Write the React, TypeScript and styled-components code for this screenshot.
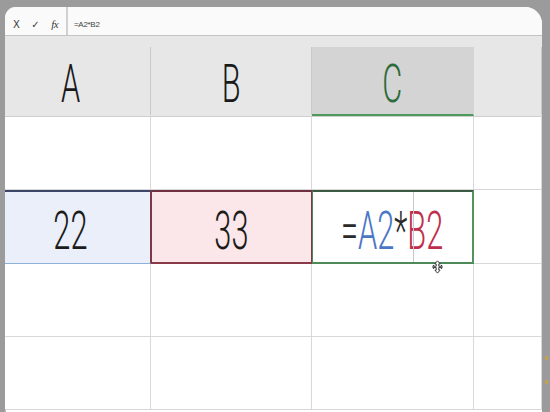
import React from "react";
import styled, { createGlobalStyle } from "styled-components";

const Global = createGlobalStyle`
  html, body { margin: 0; padding: 0; background: #9d9d9d; overflow: hidden; }
  * { box-sizing: border-box; }
`;

const Screen = styled.div`
  width: 550px;
  height: 412px;
  background: #9b9b9b;
  padding: 7px 8px 0 5px;
  display: flex;
  position: relative;
  overflow: hidden;
`;

const Window = styled.div`
  flex: 1;
  background: #ffffff;
  border-radius: 11px 17px 0 0;
  overflow: hidden;
  display: flex;
  flex-direction: column;
  box-shadow: inset 1px 0 0 #bdbdbd;
`;

const FormulaBar = styled.div`
  height: 29px;
  flex: none;
  display: flex;
  align-items: stretch;
  background: #fafafa;
  border-bottom: 1px solid #c4c4c4;
`;

const BarButtons = styled.div`
  width: 63px;
  display: flex;
  align-items: center;
  padding: 6px 0 0 8px;
  gap: 12px;
  color: #3a3a3a;
  border-right: 2px solid #d0d0d0;
`;

const BarGlyph = styled.span<{ $italic?: boolean }>`
  font-style: ${(p) => (p.$italic ? "italic" : "normal")};
  font-family: ${(p) => (p.$italic ? '"Liberation Serif", serif' : '"DejaVu Sans", sans-serif')};
  font-size: ${(p) => (p.$italic ? "11px" : "10px")};
  letter-spacing: -0.5px;
`;

const FormulaText = styled.div`
  display: flex;
  align-items: center;
  padding: 6px 0 0 6px;
  font-family: "Liberation Sans", sans-serif;
  font-size: 8px;
  color: #444;
  letter-spacing: -0.3px;
`;

const HeaderBand = styled.div`
  flex: none;
  height: 81px;
  background: #e7e7e7;
  padding-top: 11px;
  display: grid;
  grid-template-columns: 146px 161px 162px 1fr;
  border-bottom: 1px solid #cfcfcf;
`;

const HeadCell = styled.div<{ $active?: boolean; $shift?: number }>`
  display: flex;
  align-items: center;
  justify-content: center;
  padding-top: 7px;
  padding-right: ${(p) => p.$shift ?? 0}px;
  background: ${(p) => (p.$active ? "#d4d4d4" : "transparent")};
  border-right: 1px solid ${(p) => (p.$active ? "#d4d4d4" : "#c9c9c9")};
  border-bottom: 2px solid ${(p) => (p.$active ? "#4b9a5c" : "transparent")};
  color: ${(p) => (p.$active ? "#2d6b3b" : "#1a1a1a")};
`;

const Big = styled.span<{ $color?: string }>`
  display: inline-block;
  font-family: Roboto, "Liberation Sans", sans-serif;
  font-weight: 300;
  font-size: 53px;
  line-height: 1;
  color: ${(p) => p.$color ?? "inherit"};
  transform: scaleX(0.58);
  white-space: nowrap;
`;

const Grid = styled.div`
  display: flex;
  flex-direction: column;
`;

const Row = styled.div<{ $h: number }>`
  height: ${(p) => p.$h}px;
  display: grid;
  grid-template-columns: 146px 161px 162px 1fr;
`;

type Variant = "plain" | "a" | "b" | "c";

const cellStyles: Record<Variant, string> = {
  plain: `
    background: #fff;
    border-right: 1px solid #d8d8d8;
    border-bottom: 1px solid #d8d8d8;
  `,
  a: `
    background: #eaeff9;
    border-top: 2px solid #3c4668;
    border-bottom: 1px solid #8fb2dc;
    border-right: 1px solid #7a3a48;
    padding-right: 14px;
  `,
  b: `
    background: #fbe6e9;
    border-top: 2px solid #6e3040;
    border-left: 1px solid #7a3a48;
    border-right: 1px solid #7a3a48;
    border-bottom: 2px solid #8b3a4a;
  `,
  c: `
    background: #fff;
    border-top: 2px solid #3c5a44;
    border-left: 1px solid #4e8a58;
    border-right: 2px solid #54925e;
    border-bottom: 2px solid #4e8a58;
    z-index: 2;
  `,
};

const Cell = styled.div<{ $v?: Variant }>`
  position: relative;
  display: flex;
  align-items: center;
  justify-content: center;
  padding-top: 8px;
  color: #1b1b1b;
  ${(p) => cellStyles[p.$v ?? "plain"]}
`;

const EditLine = styled.div`
  position: absolute;
  left: 100px;
  top: 0;
  bottom: 0;
  width: 1px;
  background: #c9c9c9;
`;

const MoveCursor = styled.svg`
  position: absolute;
  left: 119px;
  bottom: -12px;
`;

const Part = styled.span<{ $c: string }>`
  color: ${(p) => p.$c};
`;

const Speck = styled.div<{ $top: number }>`
  position: absolute;
  right: 2px;
  top: ${(p) => p.$top}px;
  width: 3px;
  height: 4px;
  border-radius: 2px;
  background: #c9a24a;
`;

export default function App() {
  const heights = [73, 74, 73, 73];
  return (
    <>
      <Global />
      <Screen>
        <Window>
          <FormulaBar>
            <BarButtons>
              <BarGlyph>X</BarGlyph>
              <BarGlyph>✓</BarGlyph>
              <BarGlyph $italic>fx</BarGlyph>
            </BarButtons>
            <FormulaText>=A2*B2</FormulaText>
          </FormulaBar>
          <HeaderBand>
            <HeadCell $shift={14}>
              <Big>A</Big>
            </HeadCell>
            <HeadCell>
              <Big>B</Big>
            </HeadCell>
            <HeadCell $active>
              <Big>C</Big>
            </HeadCell>
            <HeadCell />
          </HeaderBand>
          <Grid>
            {heights.map((h, r) =>
              r === 1 ? (
                <Row key={r} $h={h}>
                  <Cell $v="a">
                    <Big>22</Big>
                  </Cell>
                  <Cell $v="b">
                    <Big>33</Big>
                  </Cell>
                  <Cell $v="c">
                    <Big>
                      <Part $c="#2a2a2a">=</Part>
                      <Part $c="#4a76c6">A2</Part>
                      <Part $c="#2a2a2a">*</Part>
                      <Part $c="#bf2f4d">B2</Part>
                    </Big>
                    <EditLine />
                    <MoveCursor width="11" height="14" viewBox="0 0 10 13">
                      <path
                        d="M5 0.8 L7.6 3.6 L6.2 3.6 L6.2 5.8 L8.6 5.8 L8.6 4.6 L9.4 6.4 L8.6 8.2 L8.6 7 L6.2 7 L6.2 9.4 L7.4 9.4 L5 12.2 L2.6 9.4 L3.8 9.4 L3.8 7 L1.4 7 L1.4 8.2 L0.6 6.4 L1.4 4.6 L1.4 5.8 L3.8 5.8 L3.8 3.6 L2.4 3.6 Z"
                        fill="#fff"
                        stroke="#333"
                        strokeWidth="0.9"
                      />
                    </MoveCursor>
                  </Cell>
                  <Cell />
                </Row>
              ) : (
                <Row key={r} $h={h}>
                  <Cell />
                  <Cell />
                  <Cell />
                  <Cell />
                </Row>
              )
            )}
          </Grid>
        </Window>
        <Speck $top={356} />
        <Speck $top={380} />
      </Screen>
    </>
  );
}
